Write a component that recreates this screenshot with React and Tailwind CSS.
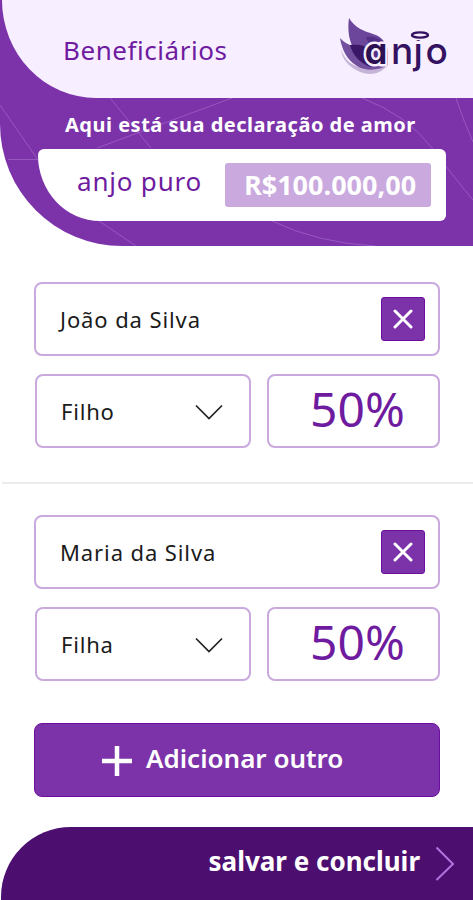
import React from "react";

function AnjoLogo() {
  return (
    <svg viewBox="0 0 116 64" className="h-16 w-[116px]" role="img" aria-label="anjo">
      <path d="M2 33C6 46 17 55 35 50L48 50C40 59 29 60 19 55C9 50 3 43 2 33Z" fill="#c6b3d8" />
      <path d="M1 22C8 30 19 32 31 35L49 49C40 54 28 56 18 50C8 44 3 34 1 22Z" fill="#73509d" />
      <path d="M10 2C16 12 25 15 34 18C44 21 49 29 49 37L49 48L28 48C15 38 7 24 10 2Z" fill="#6b469a" />
      <path d="M11 29C19 28 27 29 34 36L32 51C22 48 14 40 11 29Z" fill="#3b1867" />
      <path d="M27 21C40 19 49 27 49 40L49 49L39 49Z" fill="#553087" />
      <text
        x="25.5"
        y="48"
        fill="#2c1152"
        stroke="#f7efff"
        strokeWidth="5"
        strokeLinejoin="round"
        className="font-['Inter',sans-serif] text-[37px] font-semibold [font-feature-settings:'cv11'] [paint-order:stroke]"
      >
        a
      </text>
      <text
        x="52 74.5 86.5"
        y="48"
        fill="#351260"
        className="font-['Inter',sans-serif] text-[37px] font-medium"
      >
        njo
      </text>
      <rect x="70" y="13" width="22" height="11" fill="#f7efff" />
      <ellipse cx="81" cy="19" rx="8" ry="2.6" fill="none" stroke="#351260" strokeWidth="2.4" />
    </svg>
  );
}

function Header() {
  return (
    <header className="relative h-[246px] overflow-hidden rounded-bl-[122px] bg-[#7c33aa]">
      <svg viewBox="0 0 473 246" className="absolute inset-0 h-full w-full" fill="none" stroke="#9857bf" strokeWidth="1">
        <path d="M0 105L38 160M8 159.500H38M110 98L151 148M232 98L97 148M99 221L136 246" />
        <path d="M362 98Q407 115 432 148T473 200M456 98Q463 120 473 142M272 221Q318 243 375 246" />
      </svg>
      <div className="relative ml-0.5 flex h-[98px] items-start justify-between rounded-bl-[94px_98px] bg-[#f7efff] pr-[18px] pl-[61px]">
        <h1 className="mt-[32px] text-[26px] leading-9 tracking-[0.55px] text-[#6e1ba0]">Beneficiários</h1>
        <div className="mt-4">
          <AnjoLogo />
        </div>
      </div>
      <p className="relative mt-[11px] ml-[65px] text-[20px] leading-8 font-bold tracking-[0.5px] whitespace-nowrap text-white">
        Aqui está sua declaração de amor
      </p>
      <div className="relative mt-2 mr-[27px] ml-[38px] flex h-[72px] items-center justify-between rounded-[6px] rounded-bl-[62px_66px] bg-white pr-[15px] pl-[39px]">
        <span className="-mt-2 text-[26px] leading-9 tracking-[0.8px] text-[#6e1ba0]">anjo puro</span>
        <span className="flex h-11 w-[206px] items-center justify-center rounded-[3px] bg-[#c9a9de] pt-px pl-1 font-['Open_Sans',sans-serif] text-[27px] font-bold text-white">
          R$100.000,00
        </span>
      </div>
    </header>
  );
}

function Beneficiary({ name, relation, share }) {
  return (
    <section className="flex flex-col gap-[18px] pr-[33px] pl-[34px]">
      <div className="flex h-[74px] items-center justify-between rounded-lg border-2 border-[#c9a9de] pr-[13px] pl-6">
        <span className="text-[22px] tracking-[0.9px] text-[#1b1b1b]">{name}</span>
        <button aria-label="Remover" className="flex size-11 items-center justify-center rounded-[3px] border border-[#6c0f9f] bg-[#7c33aa]">
          <svg viewBox="0 0 20 20" className="size-5" stroke="#fff" strokeWidth="3" strokeLinecap="round">
            <path d="M2 2L18 18M18 2L2 18" />
          </svg>
        </button>
      </div>
      <div className="flex gap-4 pl-px">
        <div className="flex h-[74px] w-[216px] items-center justify-between rounded-lg border-2 border-[#c9a9de] pr-[26px] pl-6">
          <span className="text-[22px] tracking-[0.8px] text-[#1b1b1b]">{relation}</span>
          <svg viewBox="0 0 28 16" className="mt-0.5 h-4 w-7" fill="none" stroke="#222" strokeWidth="1.700">
            <path d="M1 1.500L14 14.500L27 1.500" />
          </svg>
        </div>
        <div className="flex h-[74px] flex-1 items-center justify-center rounded-lg border-2 border-[#c9a9de] pl-2 text-[48px] leading-none text-[#6e1ba0]">
          <span className="-mt-1">{share}</span>
        </div>
      </div>
    </section>
  );
}

export default function App() {
  return (
    <main className="flex h-[900px] w-[473px] flex-col overflow-hidden bg-white font-['Noto_Sans','Open_Sans',sans-serif]">
      <Header />
      <div className="mt-9">
        <Beneficiary name="João da Silva" relation="Filho" share="50%" />
      </div>
      <hr className="mt-[34px] ml-0.5 border-t-2 border-[#ececec]" />
      <div className="mt-[31px]">
        <Beneficiary name="Maria da Silva" relation="Filha" share="50%" />
      </div>
      <button className="mt-[42px] mr-[33px] ml-[34px] flex h-[74px] shrink-0 items-center rounded-lg border border-[#6c0f9f] bg-[#7c33aa] pl-[67px] text-white">
        <svg viewBox="0 0 30 30" className="mt-0.5 size-[30px]" stroke="#fff" strokeWidth="4.500">
          <path d="M15 0V30M0 15H30" />
        </svg>
        <span className="-mt-1 ml-[14px] text-[26px] font-semibold whitespace-nowrap">Adicionar outro</span>
      </button>
      <footer className="mt-[30px] ml-px flex h-[73px] shrink-0 items-center justify-end rounded-tl-[70px] bg-[#4c0f70] pr-[18px] text-white">
        <span className="-mt-1 text-[26px] font-bold whitespace-nowrap">salvar e concluir</span>
        <svg viewBox="0 0 20 36" className="ml-[15px] h-9 w-5" fill="none" stroke="#b273dc" strokeWidth="2">
          <path d="M1.500 1.500L18 18L1.500 34" />
        </svg>
      </footer>
    </main>
  );
}
